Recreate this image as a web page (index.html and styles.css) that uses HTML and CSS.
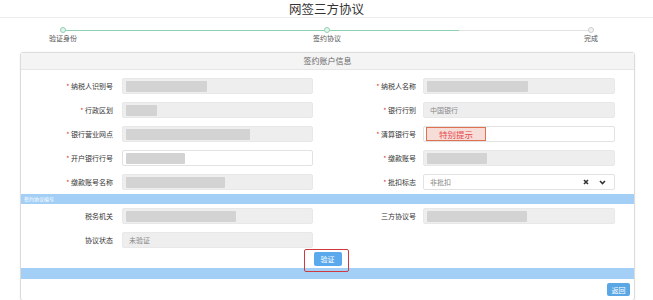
FILE: index.html
```html
<!DOCTYPE html>
<html lang="zh-CN">
<head>
    <meta charset="UTF-8">
    <meta name="viewport" content="width=device-width, initial-scale=1.0">
    <title>网签三方协议</title>
    <link rel="stylesheet" href="styles.css">
</head>
<body>
    <h1 class="title">网签三方协议</h1>

    <div class="track">
        <span class="dot done"></span>
        <span class="line done"></span>
        <span class="dot done"></span>
        <span class="line half"></span>
        <span class="dot"></span>
    </div>
    <div class="step-labels">
        <span>验证身份</span>
        <span>签约协议</span>
        <span>完成</span>
    </div>

    <div class="panel">
        <div class="panel-head">签约账户信息</div>

        <div class="form first">
            <label><i>*</i> 纳税人识别号</label>
            <div class="input ro"><span class="bar w81"></span></div>
            <label><i>*</i> 纳税人名称</label>
            <div class="input ro"><span class="bar w101"></span></div>

            <label><i>*</i> 行政区划</label>
            <div class="input ro"><span class="bar w31"></span></div>
            <label><i>*</i> 银行行别</label>
            <div class="input ro">中国银行</div>

            <label><i>*</i> 银行营业网点</label>
            <div class="input ro"><span class="bar w124"></span></div>
            <label><i>*</i> 清算银行号</label>
            <div class="input"><span class="tip">特别提示</span></div>

            <label><i>*</i> 开户银行行号</label>
            <div class="input"><span class="bar w59"></span></div>
            <label><i>*</i> 缴款账号</label>
            <div class="input ro"><span class="bar w60"></span></div>

            <label><i>*</i> 缴款账号名称</label>
            <div class="input ro"><span class="bar w99"></span></div>
            <label><i>*</i> 批扣标志</label>
            <div class="input select">
                <span>非批扣</span>
                <span class="icons">
                    <svg width="6" height="6" viewBox="0 0 6 6"><path d="M1 1L5 5M5 1L1 5" stroke="#333" stroke-width="1.6"/></svg>
                    <svg width="7" height="5" viewBox="0 0 7 5"><path d="M1 1L3.5 3.5L6 1" stroke="#333" stroke-width="1.6" fill="none"/></svg>
                </span>
            </div>
        </div>

        <div class="band">签约协议编号</div>

        <div class="form second">
            <label>税务机关</label>
            <div class="input ro"><span class="bar w110"></span></div>
            <label>三方协议号</label>
            <div class="input ro"><span class="bar w100"></span></div>

            <label>协议状态</label>
            <div class="input ro">未验证</div>
        </div>

        <div class="actions">
            <button class="btn verify">验证</button>
        </div>

        <div class="band tall"></div>

        <div class="panel-foot">
            <button class="btn">返回</button>
        </div>
    </div>
</body>
</html>
```

FILE: styles.css
```css
body {
    margin: 0;
    font-family: "Noto Sans CJK SC", "Noto Sans", sans-serif;
    background: #fff;
    color: #444;
}

.title {
    margin: 0;
    height: 17px;
    line-height: 17px;
    font-size: 12.5px;
    font-weight: normal;
    text-align: center;
    color: #333;
    border-bottom: 1px solid #ececec;
}

.track {
    display: flex;
    align-items: center;
    margin: 9px 59px 0 60px;
}

.dot {
    width: 4px;
    height: 4px;
    border: 1px solid #ccc;
    border-radius: 50%;
    background: #f4f4f4;
}

.dot.done {
    border-color: #8fd0b3;
    background: #e3f4ec;
}

.line {
    flex: 1;
    height: 1px;
    background: #ddd;
}

.line.done {
    background: #8fd0b3;
}

.line.half {
    background: linear-gradient(to right, #8fd0b3 50%, #e2e2e2 50%);
}

.step-labels {
    display: flex;
    justify-content: space-between;
    margin: 0 32px 0 33px;
    font-size: 7px;
    line-height: 10px;
    color: #555;
}

.step-labels span {
    width: 60px;
    text-align: center;
}

.panel {
    position: relative;
    margin: 9px 18px 0 20px;
    border: 1px solid #dcdcdc;
    border-radius: 3px;
    box-shadow: 0 0 2px rgba(0, 0, 0, 0.08);
}

.panel-head {
    height: 16px;
    line-height: 16px;
    font-size: 8px;
    text-align: center;
    color: #666;
    background: #f4f4f4;
    border-bottom: 1px solid #e6e6e6;
}

.form {
    display: grid;
    grid-template-columns: 101px 191px 110px 192px;
    align-items: center;
}

.form.first {
    row-gap: 8px;
    padding: 8px 0 4px;
}

.form.second {
    row-gap: 8px;
    padding: 4px 0 0;
}

.form label {
    font-size: 7px;
    text-align: right;
    padding-right: 9px;
    color: #333;
}

.form label:nth-child(4n+3) {
    padding-right: 7px;
}

.form label i {
    font-style: normal;
    color: #e03a3a;
}

.input {
    display: flex;
    align-items: center;
    height: 16px;
    box-sizing: border-box;
    padding: 0 3px;
    font-size: 7px;
    color: #888;
    background: #fff;
    border: 1px solid #e2e2e2;
    border-radius: 2px;
}

.input.ro {
    background: #eeeeee;
    border-color: #e8e8e8;
    padding-left: 6px;
}

.input.ro .bar {
    margin-left: -3px;
}

.bar {
    height: 11px;
    background: #d3d3d3;
    border-radius: 1px;
    filter: blur(0.4px);
}

.w31 { width: 31px; }
.w59 { width: 59px; }
.w60 { width: 60px; }
.w81 { width: 81px; }
.w99 { width: 99px; }
.w100 { width: 100px; }
.w101 { width: 101px; }
.w110 { width: 110px; }
.w124 { width: 124px; }

.tip {
    height: 12px;
    line-height: 12px;
    padding: 0 12px;
    margin-left: -1px;
    font-size: 8.5px;
    color: #e5484d;
    background: #f7ddd8;
    border: 1px solid #e0704f;
}

.select {
    justify-content: space-between;
    padding-left: 6px;
}

.icons {
    display: flex;
    align-items: center;
    gap: 10px;
    padding-right: 5px;
}

.band {
    height: 10px;
    line-height: 10px;
    padding-left: 3px;
    font-size: 5px;
    color: #fff;
    background: #a3cff6;
}

.band.tall {
    height: 11px;
}

.actions {
    display: flex;
    justify-content: center;
    padding: 4px 0 2px;
}

.btn {
    height: 14px;
    padding: 0 7px;
    border: none;
    border-radius: 2px;
    font-family: inherit;
    font-size: 7px;
    color: #fff;
    background: #5aa9ec;
}

.verify {
    position: relative;
    width: 28px;
    padding: 0;
}

.verify::after {
    content: "";
    position: absolute;
    left: -10px;
    right: -7px;
    top: -3px;
    bottom: -6px;
    border: 1.5px solid #cf3a40;
    border-radius: 2px;
}

.panel-foot {
    display: flex;
    justify-content: flex-end;
    padding: 4px 4px 4px;
}

.panel-foot .btn {
    width: 23px;
    height: 13px;
    padding: 0;
    background: #5ba7e6;
}
```
